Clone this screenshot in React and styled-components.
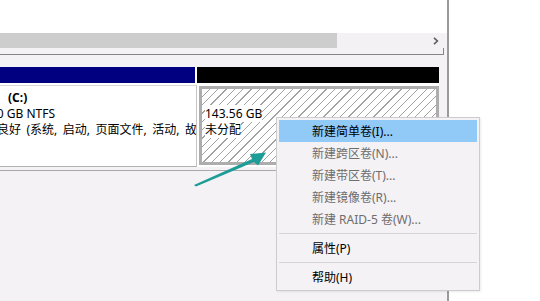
import React from "react";
import styled, { createGlobalStyle } from "styled-components";

const GlobalStyle = createGlobalStyle`
  html, body {
    margin: 0;
    padding: 0;
    background: #ffffff;
  }
  body {
    font-family: "Noto Sans", "Noto Sans CJK SC", sans-serif;
    font-size: 12px;
    color: #000;
  }
  * { box-sizing: border-box; }
`;

const Screen = styled.div`
  position: relative;
  width: 540px;
  height: 301px;
  overflow: hidden;
  display: flex;
  background: #ffffff;
`;

const Window = styled.div`
  width: 449px;
  border-right: 2px solid #9a9a9a;
  background: #f5f2f5;
  display: flex;
  flex-direction: column;
`;

const ListBody = styled.div`
  height: 33px;
  background: #ffffff;
`;

const ScrollRow = styled.div`
  width: 444px;
  height: 15px;
  display: flex;
  align-items: center;
  background: #f4f1f4;
`;

const Thumb = styled.div`
  width: 337px;
  height: 100%;
  background: #cdcdcd;
`;

const ScrollArrow = styled.div`
  margin-left: auto;
  width: 17px;
  display: flex;
  justify-content: center;
  align-items: center;
`;

const ListFoot = styled.div`
  width: 444px;
  height: 7px;
  border-right: 1px solid #858585;
  border-bottom: 1px solid #858585;
`;

const DiskRow = styled.div`
  margin-top: 12px;
  display: flex;
  height: 100px;
`;

const Column = styled.div`
  width: ${(p) => p.$width}px;
  display: flex;
  flex-direction: column;
  background: #ffffff;
`;

const Bar = styled.div`
  height: 16px;
  width: ${(p) => p.$width}px;
  background: ${(p) => p.$color};
`;

const PlainBody = styled.div`
  flex: 1;
  margin-top: 2px;
  padding-top: 4px;
  border-top: 1px solid #d8d8d8;
  border-right: 1px solid #c4c4c4;
  border-bottom: 1px solid #b2b2b2;
  overflow: hidden;
`;

const HatchWrap = styled.div`
  flex: 1;
  padding: 3px 0 2px 2px;
  display: flex;
`;

const HatchBox = styled.div`
  flex: 1;
  border: 3px solid #adadad;
  padding: 1px 0 0 3px;
  background: repeating-linear-gradient(
    135deg,
    #ffffff 0px,
    #ffffff 5px,
    #a2a2a2 5px,
    #a2a2a2 5.9px
  );
`;

const Lines = styled.div`
  margin-left: ${(p) => p.$shift || 0}px;
  white-space: nowrap;
  line-height: 16px;
`;

const Line = styled.div`
  height: 16px;
  font-weight: ${(p) => (p.$bold ? 700 : 400)};
  padding-left: ${(p) => p.$indent || 0}px;
  word-spacing: ${(p) => p.$wordGap || 0}px;
`;

const Label = styled.span`
  background: #ffffff;
`;

const RowBottom = styled.div`
  margin-top: 3px;
  width: 444px;
  border-top: 1px solid #a9a9a9;
`;

const Menu = styled.div`
  position: absolute;
  left: 276px;
  top: 117px;
  width: 204px;
  padding: 2px;
  background: #f5f2f5;
  border: 1px solid #cccccc;
  box-shadow: 1px 1px 2px rgba(0, 0, 0, 0.08);
`;

const MenuItem = styled.div`
  height: 22px;
  display: flex;
  align-items: center;
  padding-left: 33px;
  white-space: nowrap;
  background: ${(p) => (p.$active ? "#91c9f7" : "transparent")};
  color: ${(p) => (p.$disabled ? "#6d6d6d" : "#000000")};
`;

const Separator = styled.div`
  height: 1px;
  margin: 3px 0;
  background: #d6d6d6;
`;

const Overlay = styled.svg`
  position: absolute;
  left: 0;
  top: 0;
  pointer-events: none;
`;

const menuItems = [
  { text: "新建简单卷(I)...", active: true },
  { text: "新建跨区卷(N)...", disabled: true },
  { text: "新建带区卷(T)...", disabled: true },
  { text: "新建镜像卷(R)...", disabled: true },
  { text: "新建 RAID-5 卷(W)...", disabled: true },
];

export default function App() {
  return (
    <>
      <GlobalStyle />
      <Screen>
        <Window>
          <ListBody />
          <ScrollRow>
            <Thumb />
            <ScrollArrow>
              <svg width="6" height="8" viewBox="0 0 6 8">
                <polyline
                  points="1,0.8 4.4,4 1,7.2"
                  fill="none"
                  stroke="#5e5e5e"
                  strokeWidth="1.6"
                />
              </svg>
            </ScrollArrow>
          </ScrollRow>
          <ListFoot />

          <DiskRow>
            <Column $width={197}>
              <Bar $width={195} $color="#000080" />
              <PlainBody>
                <Lines $shift={-27}>
                  <Line $bold $indent={35}>(C:)</Line>
                  <Line>50.00 GB NTFS</Line>
                  <Line $wordGap={2.4}>
                    状态良好 (系统, 启动, 页面文件, 活动, 故障转储, 主分区)
                  </Line>
                </Lines>
              </PlainBody>
            </Column>
            <Column $width={242}>
              <Bar $width={242} $color="#000000" />
              <HatchWrap>
                <HatchBox>
                  <Lines>
                    <Line />
                    <Line>
                      <Label>143.56 GB</Label>
                    </Line>
                    <Line>
                      <Label>未分配</Label>
                    </Line>
                  </Lines>
                </HatchBox>
              </HatchWrap>
            </Column>
          </DiskRow>
          <RowBottom />
        </Window>

        <Overlay width="540" height="301" viewBox="0 0 540 301">
          <polygon
            points="194,185 252,159 250,154 266,152.5 258,165.5 254,162 196,186.5"
            fill="#1e9c97"
          />
        </Overlay>

        <Menu>
          {menuItems.map((item) => (
            <MenuItem
              key={item.text}
              $active={item.active}
              $disabled={item.disabled}
            >
              {item.text}
            </MenuItem>
          ))}
          <Separator />
          <MenuItem>属性(P)</MenuItem>
          <Separator />
          <MenuItem>帮助(H)</MenuItem>
        </Menu>
      </Screen>
    </>
  );
}
